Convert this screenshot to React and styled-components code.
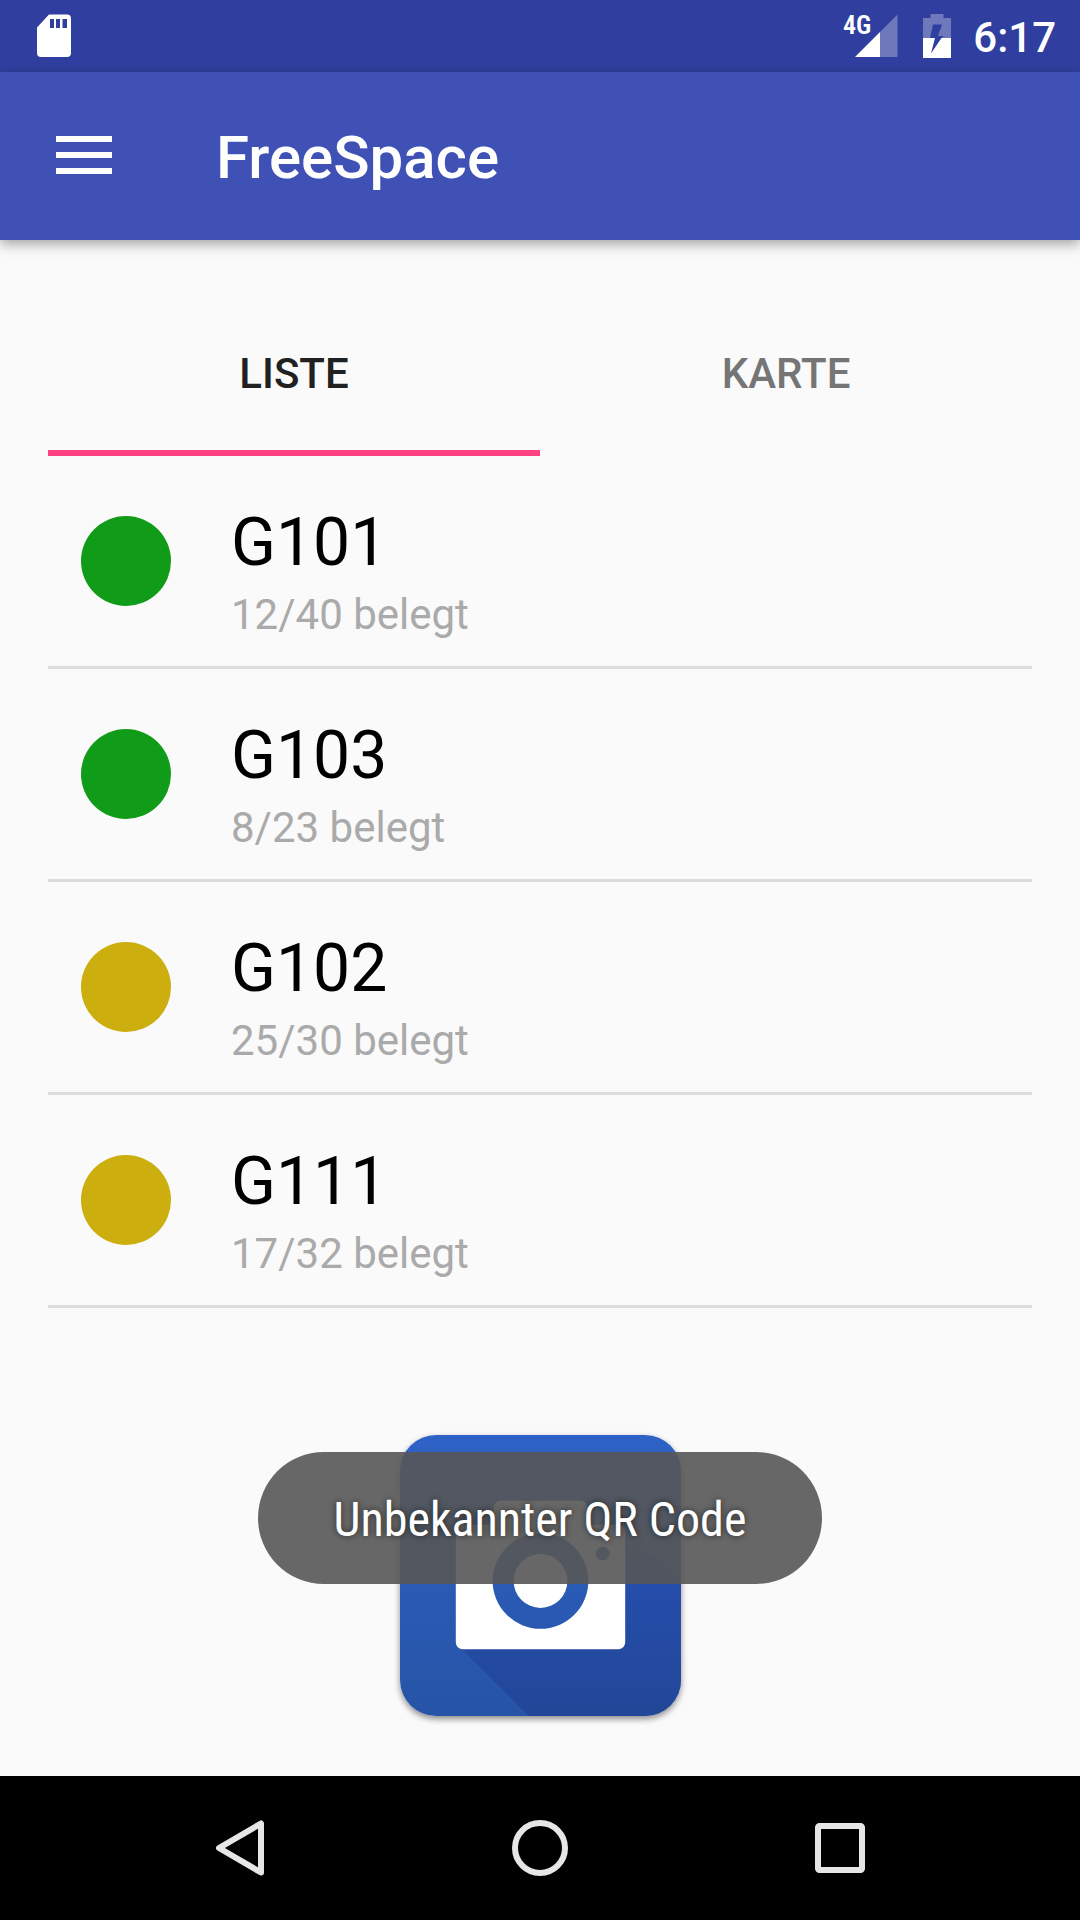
import React, { useState } from "react";
import styled, { createGlobalStyle } from "styled-components";

const GlobalStyle = createGlobalStyle`
  * { box-sizing: border-box; }
  body { margin: 0; background: #fafafa; font-family: Roboto, "Noto Sans", sans-serif; }
  button { font: inherit; border: 0; margin: 0; padding: 0; background: none; color: inherit; cursor: pointer; }
  svg { display: block; }
`;

const Screen = styled.div`
  position: relative;
  display: flex;
  flex-direction: column;
  min-height: 100vh;
`;

const StatusBar = styled.div`
  display: flex;
  align-items: center;
  justify-content: space-between;
  height: 72px;
  padding: 0 24px 0 36px;
  background: #303f9f;
  color: #fff;
`;

const StatusGroup = styled.div`
  display: flex;
  align-items: center;
`;

const Signal = styled.div`
  position: relative;
  margin-right: 24px;
`;

const NetworkLabel = styled.span`
  position: absolute;
  right: 28px;
  top: -4px;
  font-family: "Roboto Condensed", Roboto, sans-serif;
  font-size: 26px;
  font-weight: 600;
  line-height: 30px;
`;

const Clock = styled.time`
  margin-left: 22px;
  padding-top: 4px;
  font-size: 42px;
  font-weight: 500;
  line-height: 50px;
`;

const AppBar = styled.header`
  position: relative;
  display: flex;
  align-items: center;
  gap: 104px;
  height: 168px;
  padding: 0 56px 2px;
  background: #3f51b5;
  color: #fff;
  box-shadow: 0 4px 12px rgba(0, 0, 0, 0.36);
`;

const Title = styled.h1`
  margin: 0;
  padding-top: 6px;
  font-size: 60px;
  font-weight: 500;
  line-height: 72px;
`;

const Main = styled.main`
  flex: 1;
  display: flex;
  flex-direction: column;
  padding: 48px 48px 60px;
`;

const Tabs = styled.div`
  display: grid;
  grid-template-columns: 1fr 1fr;
`;

const Tab = styled.button`
  height: 168px;
  padding-top: 10px;
  border-bottom: 6px solid ${(p) => (p.$active ? "#ff4081" : "transparent")};
  color: ${(p) => (p.$active ? "#212121" : "#757575")};
  font-size: 42px;
  font-weight: 500;
  line-height: 50px;
`;

const RoomList = styled.ul`
  list-style: none;
  margin: 0;
  padding: 0;
`;

const Room = styled.li`
  display: flex;
  align-items: flex-start;
  gap: 60px;
  padding: 48px 33px 26px;
  border-bottom: 3px solid #dcdcdc;
`;

const Dot = styled.span`
  width: 90px;
  height: 90px;
  margin-top: 12px;
  border-radius: 50%;
  background: ${(p) => p.$color};
`;

const RoomText = styled.div`
  display: grid;
  gap: 8px;
`;

const RoomName = styled.span`
  color: #000;
  font-size: 66px;
  line-height: 78px;
`;

const RoomUsage = styled.span`
  color: #aaa;
  font-size: 42px;
  line-height: 50px;
`;

const ScanButton = styled.button`
  align-self: center;
  margin-top: auto;
  width: 281px;
  height: 281px;
  border-radius: 36px;
  overflow: hidden;
  box-shadow: 0 3px 6px rgba(0, 0, 0, 0.45);
`;

const ToastLayer = styled.div`
  position: absolute;
  left: 0;
  right: 0;
  bottom: 336px;
  display: flex;
  justify-content: center;
  pointer-events: none;
`;

const Toast = styled.div`
  min-width: 564px;
  padding: 38px 48px 34px;
  border-radius: 66px;
  background: rgba(86, 86, 86, 0.9);
  color: #fff;
  font-family: "Roboto Condensed", Roboto, sans-serif;
  font-size: 48px;
  line-height: 60px;
  text-align: center;
  text-shadow: 0 0 6px rgba(0, 0, 0, 0.6);
`;

const NavBar = styled.nav`
  display: grid;
  grid-template-columns: repeat(3, 1fr);
  height: 144px;
  padding: 0 90px;
  background: #000;
`;

const NavButton = styled.button`
  display: grid;
  place-items: center;
`;

const rooms = [
  { name: "G101", usage: "12/40 belegt", color: "#109c19" },
  { name: "G103", usage: "8/23 belegt", color: "#109c19" },
  { name: "G102", usage: "25/30 belegt", color: "#ccae0e" },
  { name: "G111", usage: "17/32 belegt", color: "#ccae0e" },
];

const SdCardIcon = () => (
  <svg width="36" height="44" viewBox="0 0 36 44" aria-hidden="true">
    <path
      fill="#fff"
      fillRule="evenodd"
      d="M13 .5h18a4 4 0 0 1 4 4v34.500a4 4 0 0 1-4 4H5a4 4 0 0 1-4-4V13.500zM14 5v9h4V5zm6 0v9h4V5zm6.500 0v9h4.500V5z"
    />
  </svg>
);

const SignalIcon = () => (
  <svg width="44" height="44" viewBox="1 0 44 44" aria-hidden="true">
    <path fill="#fff" fillOpacity=".3" d="M43.500 .5V43H26V18z" />
    <path fill="#fff" d="M26 18V43H1z" />
  </svg>
);

const BatteryIcon = () => (
  <svg width="28" height="44" viewBox="0 0 28 44" aria-hidden="true">
    <path
      fill="#fff"
      fillOpacity=".3"
      fillRule="evenodd"
      d="M7.500 0h13v4H28v20H0V4h7.500zM10 10.500L7 24h6.500L13 24h6l1.500-2H15l4-11.500z"
    />
    <path fill="#fff" fillRule="evenodd" d="M0 24h28v20H0zM12 24L8 39.500 18.500 24z" />
  </svg>
);

const MenuIcon = () => (
  <svg width="56" height="38" viewBox="0 0 56 38" aria-hidden="true">
    <path fill="#fff" d="M0 0h56v6H0zM0 16h56v6H0zM0 32h56v6H0z" />
  </svg>
);

const CameraIcon = () => (
  <svg width="281" height="281" viewBox="0 0 282 282" aria-hidden="true">
    <defs>
      <linearGradient id="tile" gradientUnits="userSpaceOnUse" x1="0" y1="0" x2="0" y2="282">
        <stop offset="0" stopColor="#2e62c6" />
        <stop offset="1" stopColor="#2654a6" />
      </linearGradient>
      <linearGradient id="shade" x1="0" y1="0" x2="0" y2="1">
        <stop offset="0" stopColor="#2750b4" />
        <stop offset="1" stopColor="#224798" />
      </linearGradient>
    </defs>
    <path fill="url(#tile)" d="M0 0h282v282H0z" />
    <path fill="url(#shade)" d="M59 212L129 282H282V146L224 90z" />
    <path
      fill="#fff"
      d="M101 66h80a7 7 0 0 1 7 7v17h31a7 7 0 0 1 7 7v111a7 7 0 0 1-7 7H63a7 7 0 0 1-7-7V97a7 7 0 0 1 7-7h31V73a7 7 0 0 1 7-7z"
    />
    <circle cx="141" cy="146.500" r="48" fill="url(#tile)" />
    <circle cx="203.500" cy="119" r="7" fill="url(#tile)" />
    <circle cx="141" cy="146.500" r="27" fill="#fff" />
  </svg>
);

const BackIcon = () => (
  <svg width="56" height="56" viewBox="0 0 56 56" fill="none" stroke="#e6e6e6" strokeWidth="6" strokeLinejoin="round" aria-hidden="true">
    <path d="M49 3.500V52.500L7 28z" />
  </svg>
);

const HomeIcon = () => (
  <svg width="56" height="56" viewBox="0 0 56 56" fill="none" stroke="#e6e6e6" strokeWidth="6" aria-hidden="true">
    <circle cx="28" cy="28" r="25" />
  </svg>
);

const RecentsIcon = () => (
  <svg width="50" height="50" viewBox="0 0 50 50" fill="none" stroke="#e6e6e6" strokeWidth="6" aria-hidden="true">
    <rect x="3" y="3" width="44" height="44" rx="1.500" />
  </svg>
);

export default function App() {
  const [tab, setTab] = useState("LISTE");
  return (
    <>
      <GlobalStyle />
      <Screen>
        <StatusBar>
          <SdCardIcon />
          <StatusGroup>
            <Signal>
              <NetworkLabel>4G</NetworkLabel>
              <SignalIcon />
            </Signal>
            <BatteryIcon />
            <Clock>6:17</Clock>
          </StatusGroup>
        </StatusBar>
        <AppBar>
          <button type="button" aria-label="Menü">
            <MenuIcon />
          </button>
          <Title>FreeSpace</Title>
        </AppBar>
        <Main>
          <Tabs role="tablist">
            {["LISTE", "KARTE"].map((name) => (
              <Tab
                key={name}
                type="button"
                role="tab"
                aria-selected={tab === name}
                $active={tab === name}
                onClick={() => setTab(name)}
              >
                {name}
              </Tab>
            ))}
          </Tabs>
          <RoomList>
            {rooms.map((room) => (
              <Room key={room.name}>
                <Dot $color={room.color} />
                <RoomText>
                  <RoomName>{room.name}</RoomName>
                  <RoomUsage>{room.usage}</RoomUsage>
                </RoomText>
              </Room>
            ))}
          </RoomList>
          <ScanButton type="button" aria-label="QR Code scannen">
            <CameraIcon />
          </ScanButton>
        </Main>
        <NavBar>
          <NavButton type="button" aria-label="Zurück">
            <BackIcon />
          </NavButton>
          <NavButton type="button" aria-label="Startseite">
            <HomeIcon />
          </NavButton>
          <NavButton type="button" aria-label="Übersicht">
            <RecentsIcon />
          </NavButton>
        </NavBar>
        <ToastLayer>
          <Toast role="status">Unbekannter QR Code</Toast>
        </ToastLayer>
      </Screen>
    </>
  );
}
